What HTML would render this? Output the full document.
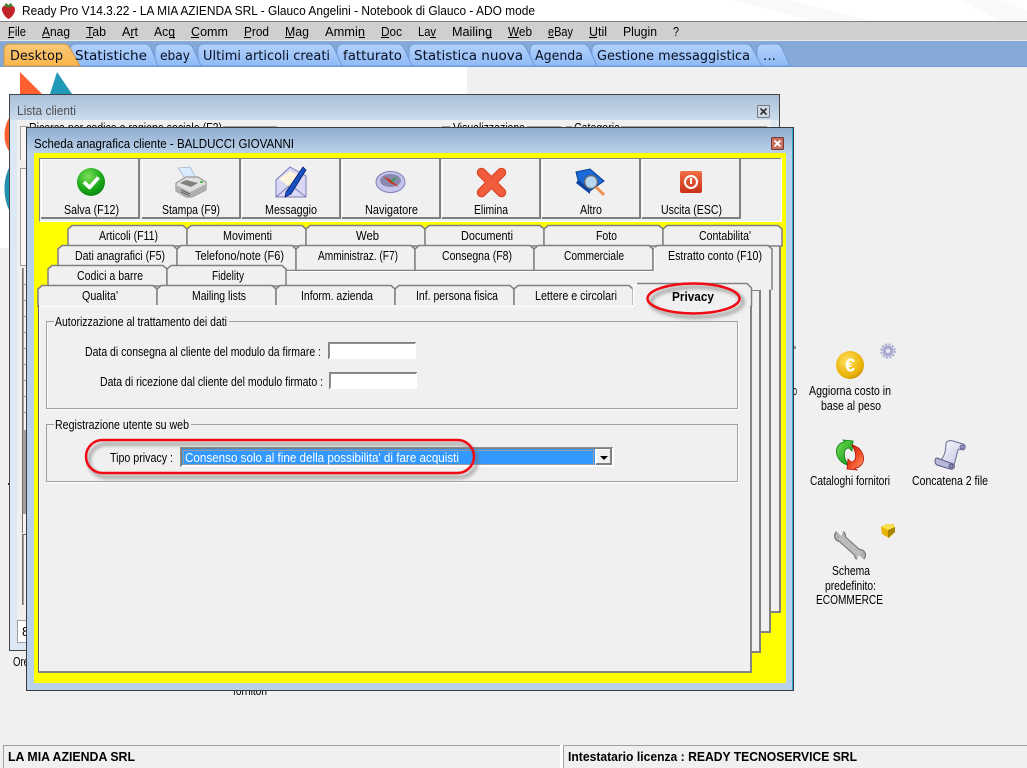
<!DOCTYPE html>
<html><head><meta charset="utf-8"><title>Ready Pro</title>
<style>
html,body{margin:0;padding:0;width:1027px;height:768px;overflow:hidden;background:#f0f0f0}
svg{display:block;position:absolute;left:0;top:0}
text{font-family:"Liberation Sans",sans-serif;font-size:13px;fill:#000}
.v{font-family:"DejaVu Sans",sans-serif;font-size:13px;fill:#0a1020}
.b{font-weight:bold;font-size:13px}
.t{stroke:#808080;stroke-width:1.5;fill:#f0f0f0}
</style></head><body>
<svg width="1027" height="768" viewBox="0 0 1027 768" xmlns="http://www.w3.org/2000/svg">
<defs>
<linearGradient id="tb" x1="0" y1="0" x2="0" y2="1"><stop offset="0" stop-color="#b3d2fd"/><stop offset="1" stop-color="#8fbaf6"/></linearGradient>
<linearGradient id="ta" x1="0" y1="0" x2="0" y2="1"><stop offset="0" stop-color="#f8c878"/><stop offset="1" stop-color="#fdb54a"/></linearGradient>
<linearGradient id="w1" x1="0" y1="0" x2="0" y2="1"><stop offset="0" stop-color="#a9bfd8"/><stop offset="1" stop-color="#cbdcec"/></linearGradient>
<linearGradient id="w2" x1="0" y1="0" x2="0" y2="1"><stop offset="0" stop-color="#90acd0"/><stop offset="1" stop-color="#bad2ea"/></linearGradient>
<radialGradient id="gr" cx=".4" cy=".3" r=".8"><stop offset="0" stop-color="#7ee05a"/><stop offset=".6" stop-color="#18a818"/><stop offset="1" stop-color="#0a7a12"/></radialGradient>
<radialGradient id="eu" cx=".4" cy=".35" r=".8"><stop offset="0" stop-color="#ffe060"/><stop offset=".7" stop-color="#eab000"/><stop offset="1" stop-color="#a87800"/></radialGradient>
<linearGradient id="ex" x1="0" y1="0" x2="0" y2="1"><stop offset="0" stop-color="#f07048"/><stop offset="1" stop-color="#c83018"/></linearGradient>
<linearGradient id="gn" x1="0" y1="0" x2="1" y2="1"><stop offset="0" stop-color="#70e050"/><stop offset="1" stop-color="#109018"/></linearGradient>
<linearGradient id="rd" x1="1" y1="1" x2="0" y2="0"><stop offset="0" stop-color="#ffa070"/><stop offset=".5" stop-color="#f04820"/><stop offset="1" stop-color="#b01008"/></linearGradient>
<linearGradient id="sc" x1="0" y1="0" x2="1" y2="1"><stop offset="0" stop-color="#fff"/><stop offset="1" stop-color="#b8b8e0"/></linearGradient>
<filter id="bl" x="-20%" y="-40%" width="140%" height="180%"><feGaussianBlur stdDeviation="1.8"/></filter>
</defs>

<!-- background -->
<rect width="1027" height="768" fill="#f0f0f0"/>
<rect x="0" y="0" width="1027" height="21" fill="#fff"/>
<polygon points="735,0 790,0 870,21 815,21" fill="#f9f9f9"/>
<polygon points="960,0 1000,0 1027,10 1027,21 1000,21" fill="#fafafa"/>
<!-- strawberry -->
<path d="M2 8.500 C2.500 5.500 6 5 8.500 5.500 C11 5 14.500 5.500 15 9 C15.500 12.500 11.500 18 8.500 19 C6 18 1.500 12.500 2 8.500Z" fill="#c02428"/>
<path d="M4 6.500 L6 3 L8.500 5 L11 3 L13 6.500 L8.500 7.500Z" fill="#4c7a30"/>
<text x="22" y="15" textLength="513" lengthAdjust="spacingAndGlyphs">Ready Pro V14.3.22 - LA MIA AZIENDA SRL - Glauco Angelini - Notebook di Glauco - ADO mode</text>

<!-- menu -->
<rect x="0" y="21" width="1027" height="20" fill="#cfcfcf"/>
<rect x="0" y="21" width="1027" height="1" fill="#808080"/>
<rect x="0" y="40" width="1027" height="1" fill="#e8e8e8"/>
<g>
<text x="8" y="36" textLength="18" lengthAdjust="spacingAndGlyphs">File</text>
<text x="42" y="36" textLength="28" lengthAdjust="spacingAndGlyphs">Anag</text>
<text x="86" y="36" textLength="20" lengthAdjust="spacingAndGlyphs">Tab</text>
<text x="122" y="36" textLength="16" lengthAdjust="spacingAndGlyphs">Art</text>
<text x="154" y="36" textLength="21" lengthAdjust="spacingAndGlyphs">Acq</text>
<text x="191" y="36" textLength="37" lengthAdjust="spacingAndGlyphs">Comm</text>
<text x="244" y="36" textLength="25" lengthAdjust="spacingAndGlyphs">Prod</text>
<text x="285" y="36" textLength="24" lengthAdjust="spacingAndGlyphs">Mag</text>
<text x="325" y="36" textLength="40" lengthAdjust="spacingAndGlyphs">Ammin</text>
<text x="381" y="36" textLength="21" lengthAdjust="spacingAndGlyphs">Doc</text>
<text x="418" y="36" textLength="18" lengthAdjust="spacingAndGlyphs">Lav</text>
<text x="452" y="36" textLength="40" lengthAdjust="spacingAndGlyphs">Mailing</text>
<text x="508" y="36" textLength="24" lengthAdjust="spacingAndGlyphs">Web</text>
<text x="548" y="36" textLength="25" lengthAdjust="spacingAndGlyphs">eBay</text>
<text x="589" y="36" textLength="18" lengthAdjust="spacingAndGlyphs">Util</text>
<text x="623" y="36" textLength="34" lengthAdjust="spacingAndGlyphs">Plugin</text>
<text x="673" y="36" textLength="6" lengthAdjust="spacingAndGlyphs">?</text>
</g>
<g fill="#000">
<rect x="8" y="37" width="6" height="1"/><rect x="42" y="37" width="8" height="1"/><rect x="86" y="37" width="7" height="1"/><rect x="130" y="37" width="4" height="1"/><rect x="169" y="37" width="6" height="1"/><rect x="191" y="37" width="8" height="1"/><rect x="244" y="37" width="7" height="1"/><rect x="285" y="37" width="9" height="1"/><rect x="359" y="37" width="6" height="1"/><rect x="381" y="37" width="8" height="1"/><rect x="430" y="37" width="6" height="1"/><rect x="486" y="37" width="6" height="1"/><rect x="508" y="37" width="11" height="1"/><rect x="548" y="37" width="6" height="1"/><rect x="589" y="37" width="8" height="1"/>
</g>

<!-- tab bar -->
<rect x="0" y="41" width="1027" height="26" fill="#87a9d8"/>
<rect x="0" y="66" width="1027" height="1" fill="#6e9ad8"/>
<g fill="url(#tb)" stroke="#6e9ad8" stroke-width="1">
<path d="M757 66V50Q757 44 763 44H776Q780 44 782 48L790 66Z"/>
<path d="M592 66V50Q592 44 598 44H746Q750 44 752 48L762 66Z"/>
<path d="M530 66V50Q530 44 536 44H583Q587 44 589 48L597 66Z"/>
<path d="M409 66V50Q409 44 415 44H520Q524 44 526 48L535 66Z"/>
<path d="M337 66V50Q337 44 343 44H398Q402 44 404 48L412 66Z"/>
<path d="M198 66V50Q198 44 204 44H328Q332 44 334 48L342 66Z"/>
<path d="M155 66V50Q155 44 161 44H187Q191 44 193 48L201 66Z"/>
<path d="M70 66V50Q70 44 76 44H145Q149 44 151 48L158 66Z"/>
<path d="M4 66V50Q4 44 10 44H64Q68 44 70 48L80 66Z" fill="url(#ta)" stroke="#c89848"/>
</g>
<text class="v" x="10" y="60" textLength="53" lengthAdjust="spacingAndGlyphs">Desktop</text>
<text class="v" x="75" y="60" textLength="72" lengthAdjust="spacingAndGlyphs">Statistiche</text>
<text class="v" x="160" y="60" textLength="30" lengthAdjust="spacingAndGlyphs">ebay</text>
<text class="v" x="203" y="60" textLength="127" lengthAdjust="spacingAndGlyphs">Ultimi articoli creati</text>
<text class="v" x="343" y="60" textLength="59" lengthAdjust="spacingAndGlyphs">fatturato</text>
<text class="v" x="414" y="60" textLength="109" lengthAdjust="spacingAndGlyphs">Statistica nuova</text>
<text class="v" x="535" y="60" textLength="48" lengthAdjust="spacingAndGlyphs">Agenda</text>
<text class="v" x="597" y="60" textLength="153" lengthAdjust="spacingAndGlyphs">Gestione messaggistica</text>
<text class="v" x="763" y="60" textLength="13" lengthAdjust="spacingAndGlyphs">...</text>

<!-- white logo area -->
<rect x="0" y="67" width="467" height="181" fill="#fff"/>
<polygon points="20,72 42,94 20,94" fill="#ff6030"/>
<polygon points="57,72 72,94 50,94" fill="#2098b8"/>
<path d="M9 118 C3 128 3 142 9 151Z" fill="#ff6030"/>
<path d="M9 168 C3 180 3 197 9 210Z" fill="#2090b0"/>

<!-- icons on desktop -->
<circle cx="850" cy="365" r="14" fill="url(#eu)"/>
<text x="850" y="371.500" text-anchor="middle" style="font-size:18px;font-weight:bold;fill:#fff">€</text>
<g transform="translate(888,351)">
<circle r="5.500" fill="#a8a8d0"/>
<circle r="6.800" fill="none" stroke="#a8a8d0" stroke-width="1.800" stroke-dasharray="2.200 1.400"/>
<circle r="2.200" fill="#e8e8f4"/>
</g>
<text x="809" y="395" textLength="82" lengthAdjust="spacingAndGlyphs">Aggiorna costo in</text>
<text x="821" y="410" textLength="60" lengthAdjust="spacingAndGlyphs">base al peso</text>
<path id="ga" d="M848 465C838 463 834 452 838 446C840 443 843 442 845 442L843 440L853 441L852 451L849 448C844 448 842 455 848 465Z" fill="url(#gn)" stroke="#0a7a12" stroke-width=".8"/>
<path d="M852 445C862 447 866 458 862 464C860 467 857 468 855 468L857 470L847 469L848 459L851 462C856 462 858 455 852 445Z" fill="url(#rd)" stroke="#b01008" stroke-width=".8"/>
<path d="M946 443C947 441 950 440 953 441L963 444C966 445 966 449 963 450L959 449C957 451 957 454 956 458C955 462 954 466 952 468L939 462C944 458 946 451 946 443Z" fill="url(#sc)" stroke="#6a6a98"/>
<path d="M937 458L953 464C956 466 954 470 950 469L937 465C934 463 935 458 937 458Z" fill="#b8b8d8" stroke="#5a5a88"/>
<circle cx="962" cy="447" r="2" fill="#9898c8" stroke="#5a5a88" stroke-width=".8"/>
<circle cx="951" cy="466" r="2" fill="#8888b8" stroke="#50507a" stroke-width=".8"/>
<text x="810" y="485" textLength="80" lengthAdjust="spacingAndGlyphs">Cataloghi fornitori</text>
<text x="912" y="485" textLength="76" lengthAdjust="spacingAndGlyphs">Concatena 2 file</text>
<!-- wrench -->
<path d="M840 537L860 555" stroke="#707070" stroke-width="8.500" stroke-linecap="round"/>
<circle cx="840" cy="536" r="5.500" fill="#b0b0b0" stroke="#707070"/>
<circle cx="860" cy="555" r="5.500" fill="#b0b0b0" stroke="#707070"/>
<path d="M840 537L860 555" stroke="#bcbcbc" stroke-width="6.500"/>
<path d="M833 528L841 536L844 530L838 526Z" fill="#f0f0f0"/>
<path d="M868 563L859 555L856 561L862 565Z" fill="#f0f0f0"/>
<!-- cube -->
<path d="M881 527L887 524H893L895 527V532L889 538L882 534Z" fill="#e8b400"/>
<path d="M881 526.500L888 530L895 527L892 524H886Z" fill="#f8e050"/>
<path d="M888 530L895 527V532L888 538Z" fill="#a88400"/>
<text x="832" y="575" textLength="38" lengthAdjust="spacingAndGlyphs">Schema</text>
<text x="825" y="590" textLength="51" lengthAdjust="spacingAndGlyphs">predefinito:</text>
<text x="816" y="604" textLength="67" lengthAdjust="spacingAndGlyphs">ECOMMERCE</text>
<text x="793" y="395" textLength="4" lengthAdjust="spacingAndGlyphs">o</text>
<rect x="794" y="346" width="2" height="3" fill="#909090"/>
<rect x="8" y="483" width="2" height="2" fill="#303030"/>

<text x="13" y="666" textLength="16" lengthAdjust="spacingAndGlyphs">Ore</text>
<text x="233" y="695" textLength="34" lengthAdjust="spacingAndGlyphs">fornitori</text>

<!-- Lista clienti window -->
<rect x="9.500" y="94.500" width="770" height="556" fill="#dde8f5" stroke="#444"/>
<rect x="10" y="95" width="769" height="25" fill="url(#w1)"/>
<text x="17" y="115" textLength="59" lengthAdjust="spacingAndGlyphs" style="fill:#505050">Lista clienti</text>
<rect x="757.500" y="105.500" width="12" height="12" rx="1" fill="#d0d8e4" stroke="#707a88"/>
<path d="M760.500 108.500L766.500 114.500M766.500 108.500L760.500 114.500" stroke="#303030" stroke-width="1.600"/>
<rect x="17" y="120" width="754" height="523" fill="#f0f0f0"/>
<rect x="20" y="127" width="7" height="33" fill="#f8f8f8"/>
<path d="M20.500 160V126.500H28" fill="none" stroke="#a0a0a0"/>
<rect x="20" y="168" width="7" height="98" fill="#f8f8f8"/>
<path d="M20.500 265.500V168.500H27M20.500 265.500H27" fill="none" stroke="#a0a0a0"/>
<rect x="22" y="268" width="5" height="265" fill="#f4f4f4"/>
<rect x="22" y="268" width="1" height="265" fill="#707070"/>
<rect x="23" y="268" width="1" height="162" fill="#a0a0a0"/>
<g fill="#909090"><rect x="24" y="284" width="3" height="1"/><rect x="24" y="300" width="3" height="1"/><rect x="24" y="316" width="3" height="1"/><rect x="24" y="332" width="3" height="1"/><rect x="24" y="348" width="3" height="1"/><rect x="24" y="364" width="3" height="1"/><rect x="24" y="380" width="3" height="1"/><rect x="24" y="396" width="3" height="1"/><rect x="24" y="412" width="3" height="1"/></g>
<rect x="23" y="430" width="4" height="84" fill="#a0a0a0"/>
<rect x="22" y="534" width="5" height="72" fill="#f4f4f4"/>
<path d="M22.500 605V534.500H27" fill="none" stroke="#707070"/>
<rect x="23" y="535" width="1" height="70" fill="#a0a0a0"/>
<path d="M27 620.500H17.500V642.500H27" fill="#fff" stroke="#a0a0a0"/>
<text x="22" y="636">8</text>
<text x="29" y="132" textLength="193" lengthAdjust="spacingAndGlyphs">Ricerca per codice o ragione sociale (F3)</text>
<text x="453" y="132" textLength="72" lengthAdjust="spacingAndGlyphs">Visualizzazione</text>
<text x="574" y="132" textLength="46" lengthAdjust="spacingAndGlyphs">Categoria</text>
<rect x="223" y="126" width="54" height="1" fill="#a0a0a0"/><rect x="442" y="126" width="8" height="1" fill="#a0a0a0"/><rect x="527" y="126" width="34" height="1" fill="#a0a0a0"/><rect x="566" y="126" width="6" height="1" fill="#a0a0a0"/><rect x="621" y="126" width="146" height="1" fill="#a0a0a0"/>

<!-- main window -->
<rect x="26.500" y="127.500" width="767" height="563" fill="#b9d1ea" stroke="#3a3a3a"/>
<rect x="27" y="128" width="766" height="25" fill="url(#w2)"/>
<rect x="792" y="128" width="1" height="562" fill="#30a8d8"/>
<text x="34" y="148" textLength="260" lengthAdjust="spacingAndGlyphs">Scheda anagrafica cliente - BALDUCCI GIOVANNI</text>
<rect x="771.500" y="137.500" width="12" height="12" rx="1" fill="#c87060" stroke="#703830"/>
<path d="M774.500 140.500L780.500 146.500M780.500 140.500L774.500 146.500" stroke="#fff" stroke-width="1.800"/>
<rect x="34" y="153" width="752" height="530" fill="#ffff00"/>

<!-- toolbar -->
<rect x="39" y="158" width="743" height="64" fill="#f0f0f0"/>
<path d="M39.500 222V158.500H781.500" fill="none" stroke="#808080"/>
<path d="M39.500 221.500H781.500V158" fill="none" stroke="#fff"/>
<g fill="none">
<path d="M41.500 219V159.500H139" stroke="#fff"/><path d="M41 218H139V159" stroke="#808080" stroke-width="2"/>
<path d="M142.500 219V159.500H239" stroke="#fff"/><path d="M142 218H240V159" stroke="#808080" stroke-width="2"/>
<path d="M242.500 219V159.500H339" stroke="#fff"/><path d="M242 218H340V159" stroke="#808080" stroke-width="2"/>
<path d="M342.500 219V159.500H439" stroke="#fff"/><path d="M342 218H440V159" stroke="#808080" stroke-width="2"/>
<path d="M442.500 219V159.500H539" stroke="#fff"/><path d="M442 218H540V159" stroke="#808080" stroke-width="2"/>
<path d="M542.500 219V159.500H639" stroke="#fff"/><path d="M542 218H640V159" stroke="#808080" stroke-width="2"/>
<path d="M642.500 219V159.500H739" stroke="#fff"/><path d="M642 218H740V159" stroke="#808080" stroke-width="2"/>
</g>
<text x="64" y="214" textLength="55" lengthAdjust="spacingAndGlyphs">Salva (F12)</text>
<text x="162" y="214" textLength="58" lengthAdjust="spacingAndGlyphs">Stampa (F9)</text>
<text x="265" y="214" textLength="52" lengthAdjust="spacingAndGlyphs">Messaggio</text>
<text x="365" y="214" textLength="53" lengthAdjust="spacingAndGlyphs">Navigatore</text>
<text x="474" y="214" textLength="34" lengthAdjust="spacingAndGlyphs">Elimina</text>
<text x="580" y="214" textLength="22" lengthAdjust="spacingAndGlyphs">Altro</text>
<text x="661" y="214" textLength="61" lengthAdjust="spacingAndGlyphs">Uscita (ESC)</text>

<!-- toolbar icons -->
<circle cx="91" cy="182" r="14" fill="url(#gr)"/>
<path d="M84 182L89.500 187.500L98.500 177.500" fill="none" stroke="#fff" stroke-width="3.600" stroke-linejoin="round"/>
<!-- printer -->
<path d="M178 168L190 167L197 180H186Z" fill="#dcecff" stroke="#a8b8c8" stroke-width=".8"/>
<path d="M176 183L186 177H198L206 182V190L192 197H186L176 191Z" fill="#e0e0e0" stroke="#888"/>
<path d="M176 185L190 192L206 184V190L192 197H186L176 191Z" fill="#b0b0b0"/>
<path d="M180 183L186 180L198 183L191 187Z" fill="#808080"/>
<path d="M181 190L190 194M181 192L190 196" stroke="#505050" stroke-width=".8"/>
<rect x="200" y="181" width="3" height="2" fill="#50c050"/>
<!-- envelope+pen -->
<path d="M276 180L290 167L306 176V197H276Z" fill="#d8d8f4" stroke="#7c7cb8"/>
<path d="M279 179L290 171L303 178L291 188Z" fill="#fff4dc"/>
<path d="M276 197L289 186M306 197L292 186" stroke="#7c7cb8" fill="none"/>
<path d="M286 192L303 167L306 170L291 194L285 197Z" fill="#1850c0" stroke="#0a2070" stroke-width=".8"/>
<!-- compass -->
<ellipse cx="390.500" cy="182" rx="14.500" ry="10.500" fill="#c4c4ec" stroke="#8080b8"/>
<ellipse cx="390.500" cy="180.500" rx="10.500" ry="6.500" fill="#8a8ab0"/>
<path d="M383 176L391 180L399 187L390 183Z" fill="#d03020"/>
<path d="M391 180L398 176L392 183Z" fill="#30a050"/>
<!-- X -->
<path d="M481.500 172.500L501.500 192.500M501.500 172.500L481.500 192.500" stroke="#d84020" stroke-width="9.500" stroke-linecap="round"/>
<path d="M481.500 172.500L501.500 192.500M501.500 172.500L481.500 192.500" stroke="#f05c3c" stroke-width="7.500" stroke-linecap="round"/>
<!-- book/lens -->
<path d="M576 172L590 169L604 181L590 191L578 180Z" fill="#1a6ad8" stroke="#0a4090"/>
<path d="M578 180L590 191L590 194L576 183Z" fill="#0a40a0"/>
<circle cx="591" cy="182" r="6.500" fill="#b8d8f0" stroke="#606878" stroke-width="1.500"/>
<path d="M596 187L604 195" stroke="#f09050" stroke-width="3"/>
<!-- exit -->
<rect x="680" y="171" width="22" height="22" rx="2" fill="url(#ex)"/>
<circle cx="691" cy="182" r="6" fill="none" stroke="#fff" stroke-width="2"/>
<rect x="690" y="178" width="2" height="6" fill="#fff"/>

<!-- stacked pages -->
<rect x="68" y="245" width="713" height="368" fill="#f0f0f0"/>
<path d="M780 245V612H760" fill="none" stroke="#808080" stroke-width="2"/>
<rect x="58" y="265" width="713" height="368" fill="#f0f0f0"/>
<path d="M770 265V632H750" fill="none" stroke="#808080" stroke-width="2"/>
<rect x="48" y="285" width="713" height="368" fill="#f0f0f0"/>
<path d="M760 290V652H750" fill="none" stroke="#808080" stroke-width="2"/>
<path d="M752 290.500H760" fill="none" stroke="#808080"/>

<!-- row 1 tabs -->
<path class="t" d="M68 246V229L72 225.500H183L187 229V246Z"/>
<path class="t" d="M187 246V229L191 225.500H302L306 229V246Z"/>
<path class="t" d="M306 246V229L310 225.500H421L425 229V246Z"/>
<path class="t" d="M425 246V229L429 225.500H540L544 229V246Z"/>
<path class="t" d="M544 246V229L548 225.500H659L663 229V246Z"/>
<path class="t" d="M663 246V229L667 225.500H778L782 229V246Z"/>
<!-- row 2 tabs -->
<path class="t" d="M58 270.500V249L62 245.500H173L177 249V270.500Z"/>
<path class="t" d="M177 270.500V249L181 245.500H292L296 249V270.500Z"/>
<path class="t" d="M296 270.500V249L300 245.500H411L415 249V270.500Z"/>
<path class="t" d="M415 270.500V249L419 245.500H530L534 249V270.500Z"/>
<path class="t" d="M534 270.500V249L538 245.500H649L653 249V270.500Z"/>
<rect x="286" y="271" width="367" height="1" fill="#fff"/>
<path d="M653 271V249L657 245.500H768L772 249V290" fill="#f0f0f0" stroke="#808080" stroke-width="1.500"/>
<rect x="654" y="268" width="106" height="22" fill="#f0f0f0"/>
<rect x="654" y="247" width="1" height="24" fill="#fff"/>
<!-- row 3 tabs -->
<path class="t" d="M48 286V269L52 265.500H163L167 269V286Z"/>
<path class="t" d="M167 286V269L171 265.500H282L286 269V286Z"/>
<!-- row 4 tabs -->
<path class="t" d="M38 306V289L42 285.500H153L157 289V306Z"/>
<path class="t" d="M157 306V289L161 285.500H272L276 289V306Z"/>
<path class="t" d="M276 306V289L280 285.500H391L395 289V306Z"/>
<path class="t" d="M395 306V289L399 285.500H510L514 289V306Z"/>
<path class="t" d="M514 306V289L518 285.500H629L633 289V306Z"/>

<!-- tab labels -->
<text x="99" y="240" textLength="59" lengthAdjust="spacingAndGlyphs">Articoli (F11)</text>
<text x="223" y="240" textLength="49" lengthAdjust="spacingAndGlyphs">Movimenti</text>
<text x="356" y="240" textLength="23" lengthAdjust="spacingAndGlyphs">Web</text>
<text x="461" y="240" textLength="52" lengthAdjust="spacingAndGlyphs">Documenti</text>
<text x="596" y="240" textLength="21" lengthAdjust="spacingAndGlyphs">Foto</text>
<text x="699" y="240" textLength="52" lengthAdjust="spacingAndGlyphs">Contabilita'</text>
<text x="75" y="260" textLength="90" lengthAdjust="spacingAndGlyphs">Dati anagrafici (F5)</text>
<text x="195" y="260" textLength="89" lengthAdjust="spacingAndGlyphs">Telefono/note (F6)</text>
<text x="318" y="260" textLength="80" lengthAdjust="spacingAndGlyphs">Amministraz. (F7)</text>
<text x="442" y="260" textLength="70" lengthAdjust="spacingAndGlyphs">Consegna (F8)</text>
<text x="564" y="260" textLength="60" lengthAdjust="spacingAndGlyphs">Commerciale</text>
<text x="668" y="260" textLength="94" lengthAdjust="spacingAndGlyphs">Estratto conto (F10)</text>
<text x="77" y="280" textLength="66" lengthAdjust="spacingAndGlyphs">Codici a barre</text>
<text x="212" y="280" textLength="32" lengthAdjust="spacingAndGlyphs">Fidelity</text>
<text x="82" y="300" textLength="36" lengthAdjust="spacingAndGlyphs">Qualita'</text>
<text x="192" y="300" textLength="54" lengthAdjust="spacingAndGlyphs">Mailing lists</text>
<text x="301" y="300" textLength="72" lengthAdjust="spacingAndGlyphs">Inform. azienda</text>
<text x="416" y="300" textLength="82" lengthAdjust="spacingAndGlyphs">Inf. persona fisica</text>
<text x="535" y="300" textLength="82" lengthAdjust="spacingAndGlyphs">Lettere e circolari</text>

<!-- main page -->
<rect x="38" y="305" width="714" height="368" fill="#f0f0f0"/>
<rect x="38" y="305" width="1" height="368" fill="#606060"/>
<path d="M39.500 671V306.500H633M752 306.500H750" fill="none" stroke="#fff"/>
<path d="M38 672H751V306" fill="none" stroke="#858585" stroke-width="2"/>
<path d="M633.500 306V287L637 283.500H746L751 288V306H634Z" fill="#f0f0f0"/>
<path d="M633.500 306V287L637 283.500H747" fill="none" stroke="#fff" stroke-width="1.500"/>
<path d="M637 283.500H747L751.500 288V306" fill="none" stroke="#808080" stroke-width="1.500"/>
<text class="b" x="672" y="301" textLength="42" lengthAdjust="spacingAndGlyphs">Privacy</text>

<!-- groups -->
<g fill="none">
<path d="M47.500 407V323.500M47 409.500H738.500V322" stroke="#fff"/>
<path d="M47 482.500H738.500V425" stroke="#fff"/>
<path d="M54 321.500H46.500V408.500H737.500V321.500H229" stroke="#a0a0a0"/>
<path d="M54 424.500H46.500V481.500H737.500V424.500H191" stroke="#a0a0a0"/>
</g>
<text x="55" y="326" textLength="172" lengthAdjust="spacingAndGlyphs">Autorizzazione al trattamento dei dati</text>
<text x="85" y="356" textLength="236" lengthAdjust="spacingAndGlyphs">Data di consegna al cliente del modulo da firmare :</text>
<text x="100" y="386" textLength="223" lengthAdjust="spacingAndGlyphs">Data di ricezione dal cliente del modulo firmato :</text>
<text x="55" y="429" textLength="134" lengthAdjust="spacingAndGlyphs">Registrazione utente su web</text>

<rect x="328" y="342" width="88" height="17" fill="#fff"/>
<path d="M328.500 359V342.500H416" fill="none" stroke="#808080"/>
<path d="M329.500 358V343.500H415" fill="none" stroke="#909090"/>
<rect x="330" y="372" width="87" height="17" fill="#fff"/>
<path d="M329.500 389V372.500H417" fill="none" stroke="#808080"/>
<path d="M330.500 388V373.500H416" fill="none" stroke="#909090"/>

<!-- combo -->
<text x="110" y="462" textLength="63" lengthAdjust="spacingAndGlyphs">Tipo privacy :</text>
<rect x="180" y="447" width="434" height="20" fill="#fff"/>
<path d="M180.500 467V447.500H613" fill="none" stroke="#909090"/>
<path d="M181.500 466V448.500H612" fill="none" stroke="#808080"/>
<rect x="182" y="449" width="413" height="16" fill="#3399ff"/>
<rect x="183.500" y="450.500" width="410" height="14" fill="none" stroke="#ffa040" stroke-width="1" stroke-dasharray="1 1"/>
<text x="185" y="462" textLength="274" lengthAdjust="spacingAndGlyphs" style="fill:#fff">Consenso solo al fine della possibilita' di fare acquisti</text>
<rect x="596" y="449" width="16" height="16" fill="#f0f0f0"/>
<path d="M596.500 465V449.500H612" fill="none" stroke="#fff"/>
<path d="M596 464H611V449" fill="none" stroke="#808080" stroke-width="2"/>
<polygon points="600,456 608,456 604,460" fill="#000"/>

<!-- highlight ellipses -->
<g fill="none">
<ellipse cx="697" cy="302" rx="46" ry="15" stroke="#707070" stroke-width="3.500" opacity=".6" filter="url(#bl)"/>
<rect x="89" y="444" width="388" height="33" rx="17" stroke="#707070" stroke-width="3.500" opacity=".6" filter="url(#bl)"/>
<ellipse cx="693.500" cy="298.500" rx="46" ry="15" stroke="#f00a14" stroke-width="2.500"/>
<rect x="86" y="440" width="388" height="33" rx="16.500" stroke="#f00a14" stroke-width="2.500"/>
</g>

<!-- status bar -->
<rect x="3" y="745" width="557" height="23" fill="#f0f0f0"/>
<path d="M3.500 768V745.500H560" fill="none" stroke="#a0a0a0"/>
<rect x="560" y="745" width="3" height="23" fill="#fff"/>
<path d="M563.500 768V745.500H1027" fill="none" stroke="#a0a0a0"/>
<text class="b" x="8" y="761" textLength="127" lengthAdjust="spacingAndGlyphs">LA MIA AZIENDA SRL</text>
<text class="b" x="568" y="761" textLength="289" lengthAdjust="spacingAndGlyphs">Intestatario licenza : READY TECNOSERVICE SRL</text>
</svg>
</body></html>
